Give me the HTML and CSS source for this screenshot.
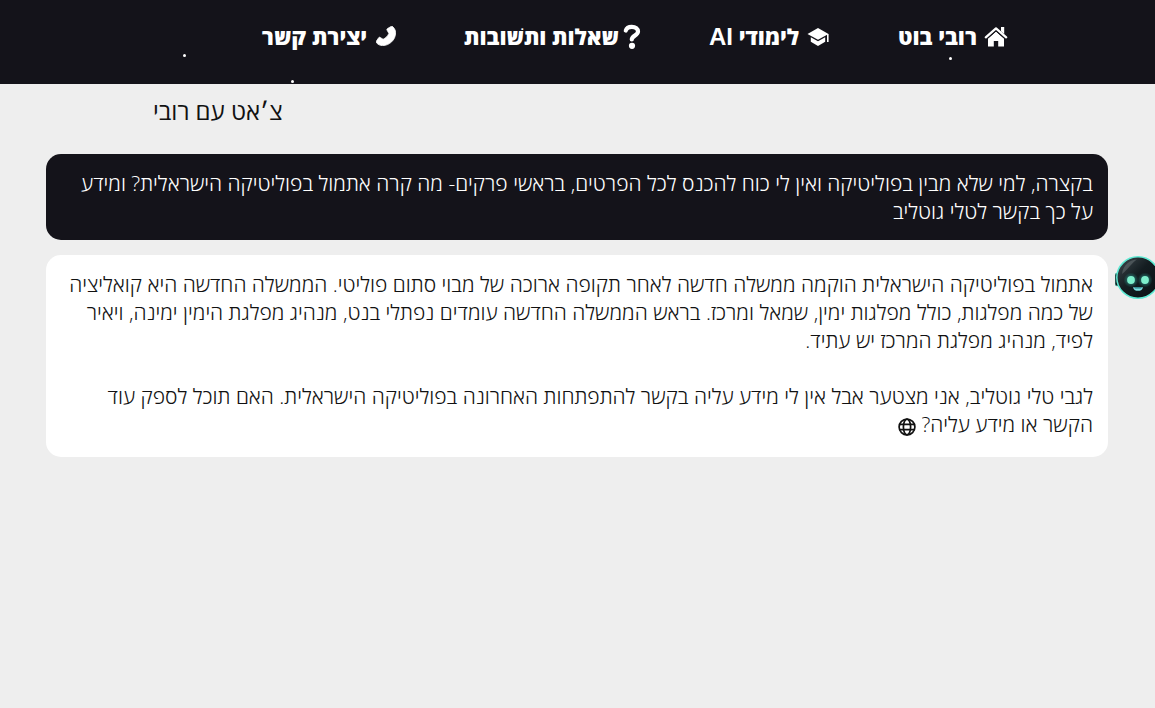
FILE: index.html
```html
<!DOCTYPE html>
<html lang="he" dir="rtl">
<head>
<meta charset="utf-8">
<meta name="viewport" content="width=device-width, initial-scale=1">
<title>צ׳אט עם רובי</title>
<link rel="stylesheet" href="styles.css">
</head>
<body>
<header class="site-header">
  <nav class="nav">
    <a class="nav-link" href="#bot">
      <svg class="icon" viewBox="0 0 24 24" aria-hidden="true"><path d="M4 14.500 12 7.500l8 7V22.500h-5.800v-5.500h-4.400v5.500H4z" fill="currentColor"/><path d="M17 3h3.200v7L17 7.200z" fill="currentColor"/><path d="M1.800 13.300 12 4.400l10.200 8.900" fill="none" stroke="currentColor" stroke-width="2.300" stroke-linecap="round" stroke-linejoin="round"/><path d="M3.400 14.600 12 7.100l8.600 7.500" fill="none" stroke="#14131a" stroke-width="1"/></svg>
      <span>רובי בוט</span>
    </a>
    <a class="nav-link" href="#learn">
      <svg class="icon" viewBox="0 0 24 24" aria-hidden="true"><path d="M12 4 1.500 10 12 15.800 22.500 10z" fill="currentColor"/><path d="M4.800 13.300v4.500l7.200 4.200 7.200-4.200v-4.500L12 17.300z" fill="currentColor"/><path d="M21.800 10V18" stroke="currentColor" stroke-width="1.600"/></svg>
      <span>לימודי <span class="latin">AI</span></span>
    </a>
    <a class="nav-link nav-link-tight" href="#faq">
      <svg class="icon icon-narrow" viewBox="0 0 18 26" aria-hidden="true"><path d="M2.800 7.500C3.500 5 5.800 3.800 8.800 3.800c3.800 0 6.200 1.800 6.200 4.700 0 4.200-6.200 4-6.200 8" fill="none" stroke="currentColor" stroke-width="4.200" stroke-linecap="round"/><circle cx="9" cy="22.800" r="3.100" fill="currentColor"/></svg>
      <span>שאלות ותשׁובות</span>
    </a>
    <a class="nav-link nav-link-wide" href="#contact">
      <svg class="icon icon-phone" viewBox="0 0 20 20" aria-hidden="true"><path d="M11.500 2.600 15.200.4c.5-.3 1-.2 1.400.2C18.600 2.500 19.600 4.500 19.600 6.800 19.600 13.800 13.500 19.600 6.500 19.600c-2.200 0-4.400-1-6-2.800-.4-.4-.5-1-.2-1.500l2.400-3.600c.3-.5.9-.6 1.400-.3l3 1.900c2.600-1.300 4.600-3.200 5.800-5.900L11 4.100c-.3-.6-.1-1.200.5-1.500z" fill="currentColor" stroke="currentColor" stroke-width=".8"/></svg>
      <span>יצירת קשר</span>
    </a>
  </nav>
  <i class="star star-a"></i><i class="star star-b"></i><i class="star star-c"></i>
</header>
<main class="chat">
  <h1 class="title">צ׳אט עם רובי</h1>
  <section class="messages">
    <div class="bubble bubble-user">
      <p>בקצרה, למי שלא מבין בפוליטיקה ואין לי כוח להכנס לכל הפרטים, בראשי פרקים- מה קרה אתמול בפוליטיקה הישראלית? ומידע על כך בקשר לטלי גוטליב</p>
    </div>
    <div class="bubble bubble-bot">
      <svg class="avatar" viewBox="0 0 48 44" role="img" aria-label="רובי">
        <defs><linearGradient id="face" x1="0" y1="0" x2="1" y2="1"><stop offset="0" stop-color="#414b50"/><stop offset=".45" stop-color="#141d21"/><stop offset="1" stop-color="#0a1114"/></linearGradient>
        <radialGradient id="glow"><stop offset="0" stop-color="#2fb5a5" stop-opacity=".8"/><stop offset="1" stop-color="#2fb5a5" stop-opacity="0"/></radialGradient></defs>
        <rect x="0" y="18" width="6" height="13" rx="2" fill="#10191c" stroke="#63e6cf" stroke-width=".6"/>
        <ellipse cx="23" cy="22.500" rx="21.200" ry="20.700" fill="url(#face)" stroke="#5eead4" stroke-width="1.500"/>
        <path d="M7 19C8 10 15 4.500 22 4.500c-5 3-8 9-15 14.500" fill="#8d9598" opacity=".35"/>
        <circle cx="16" cy="25" r="7.500" fill="url(#glow)"/><circle cx="30" cy="25" r="7.500" fill="url(#glow)"/>
        <circle cx="16" cy="25" r="3.900" fill="#7deecb"/><circle cx="30" cy="25" r="3.900" fill="#7deecb"/>
        <path d="M18 32.200h10c-.5 2.500-2.200 3.600-5 3.600s-4.500-1.100-5-3.600z" fill="#7ddfe0"/><path d="M19 32.200h8l-1 1.200h-6z" fill="#277f86"/>
      </svg>
      <p>אתמול בפוליטיקה הישראלית הוקמה ממשלה חדשה לאחר תקופה ארוכה של מבוי סתום פוליטי. הממשלה החדשה היא קואליציה של כמה מפלגות, כולל מפלגות ימין, שמאל ומרכז. בראש הממשלה החדשה עומדים נפתלי בנט, מנהיג מפלגת הימין ימינה, ויאיר לפיד, מנהיג מפלגת המרכז יש עתיד.</p>
      <p>לגבי טלי גוטליב, אני מצטער אבל אין לי מידע עליה בקשר להתפתחות האחרונה בפוליטיקה הישראלית. האם תוכל לספק עוד הקשר או מידע עליה?
        <svg class="globe" viewBox="0 0 18 18" aria-hidden="true"><g fill="none" stroke="currentColor" stroke-width="1.700"><circle cx="9" cy="9" r="7.900"/><ellipse cx="9" cy="9" rx="3.600" ry="7.900"/><path d="M1.500 6.300h15M1.500 11.700h15"/></g></svg></p>
    </div>
  </section>
</main>
</body>
</html>
```

FILE: styles.css
```css
* { box-sizing: border-box; }
body {
  margin: 0;
  min-height: 100vh;
  background: #eee;
  color: #111;
  font-family: "Open Sans", "Noto Sans", "Liberation Sans", sans-serif;
}
.site-header {
  position: relative;
  background: #14131a;
  padding: 20px 147px 32px 0;
}
.nav { display: flex; gap: 68px; }
.nav-link {
  display: flex;
  align-items: center;
  gap: 7px;
  height: 32px;
  color: #fff;
  font-size: 22px;
  font-weight: 800;
  line-height: 32px;
  text-decoration: none;
  white-space: nowrap;
}
.nav-link-tight { gap: 4px; }
.nav-link-wide { gap: 9px; }
.latin {
  font-family: "Liberation Sans", sans-serif;
  font-size: 24px;
  font-weight: 700;
}
.icon { width: 24px; height: 24px; flex: none; }
.icon-narrow { width: 18px; height: 26px; }
.icon-phone { width: 20px; height: 20px; }
.star {
  position: absolute;
  width: 3px;
  height: 3px;
  border-radius: 50%;
  background: #fff;
}
.star-a { left: 949px; top: 57px; }
.star-b { left: 183px; top: 54px; }
.star-c { left: 291px; top: 80px; }
.title {
  margin: 0;
  padding: 10px 0 26px 153px;
  font-size: 24px;
  font-weight: 400;
  line-height: 34px;
  text-align: left;
}
.messages {
  display: flex;
  flex-direction: column;
  gap: 15px;
  padding: 0 47px 0 46px;
}
.bubble {
  position: relative;
  padding: 15px;
  border-radius: 15px;
  font-size: 21px;
  font-weight: 300;
  line-height: 28px;
}
.bubble p { margin: 0; }
.bubble p + p { margin-top: 28px; }
.bubble-user { background: #14131a; color: #fff; }
.bubble-bot { background: #fff; padding-bottom: 19px; }
.avatar {
  position: absolute;
  right: -55px;
  top: 0;
  width: 48px;
  height: 44px;
}
.globe { width: 18px; height: 18px; vertical-align: -4px; }
```
